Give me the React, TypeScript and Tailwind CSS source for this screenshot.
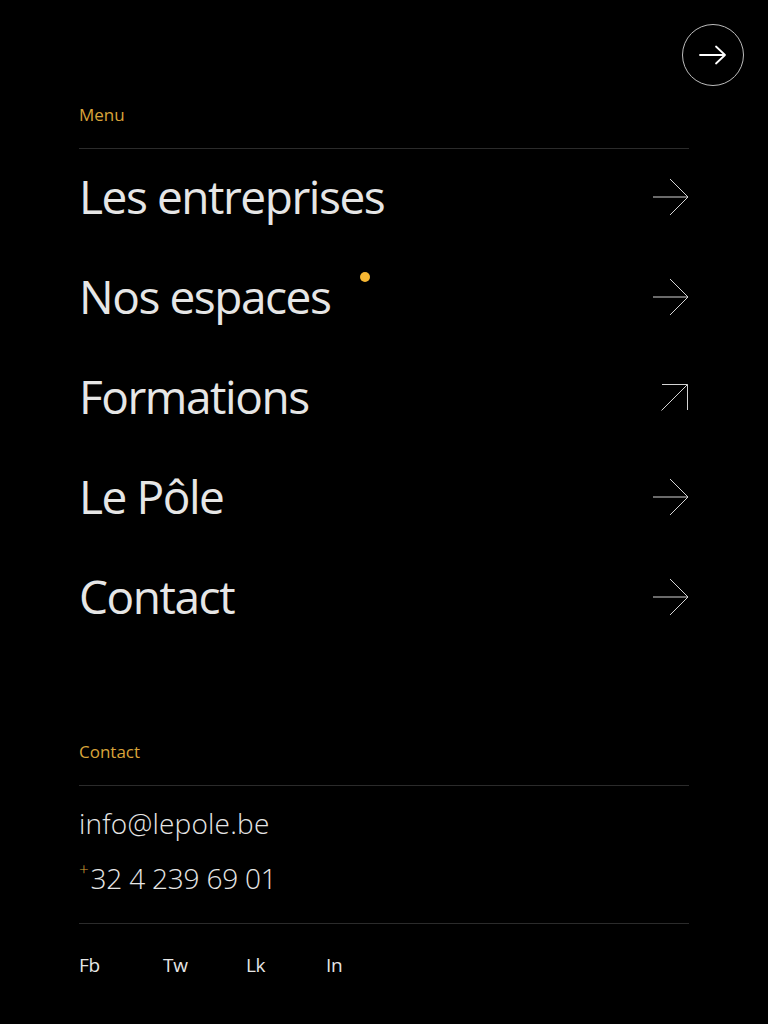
import React from "react";

const font = { fontFamily: '"Open Sans", "Noto Sans", sans-serif' };

function ArrowRight() {
  return (
    <svg width="37" height="38" viewBox="0 0 37 38" fill="none" className="block">
      <path d="M1 19 H36 M18 1 L36 19 L18 37" stroke="#d4d4d4" strokeWidth="1" />
    </svg>
  );
}

function ArrowUpRight() {
  return (
    <svg width="28" height="28" viewBox="0 0 28 28" fill="none" className="block">
      <path d="M1 1.5 H26.5 V27 M26.5 1.5 L0.5 27.5" stroke="#d4d4d4" strokeWidth="1" />
    </svg>
  );
}

const items = [
  { label: "Les entreprises", dot: false, ext: false },
  { label: "Nos espaces", dot: true, ext: false },
  { label: "Formations", dot: false, ext: true },
  { label: "Le Pôle", dot: false, ext: false },
  { label: "Contact", dot: false, ext: false },
];

export default function App() {
  return (
    <div className="min-h-[1024px] w-full bg-black text-[#e6e6e6]" style={font}>
      <div className="flex justify-end pt-[24px] pr-[24px]">
        <button className="flex h-[62px] w-[62px] items-center justify-center rounded-full border border-[#bdbdbd]">
          <svg width="28" height="20" viewBox="0 0 28 20" fill="none">
            <path d="M1 10 H26 M17 1.5 L26 10 L17 18.5" stroke="#ffffff" strokeWidth="1.8" strokeLinecap="round" strokeLinejoin="round" />
          </svg>
        </button>
      </div>

      <div className="px-[79px]">
        <div className="mt-[17px] border-b border-[#2b2b2b] pb-[21px] text-[17px] leading-[24px] text-[#d9a43a]">
          Menu
        </div>
        <ul>
          {items.map((it) => (
            <li key={it.label} className="flex h-[100px] items-center justify-between pb-[4px]">
              <div className="relative flex items-center">
                <span className="pb-[2px] text-[46px] leading-[60px] tracking-[-1.45px] text-[#e6e6e6]">{it.label}</span>
                {it.dot && (
                  <span className="absolute right-[-40px] top-[6px] h-[10px] w-[10px] rounded-full bg-[#f7b733]" />
                )}
              </div>
              {it.ext ? <ArrowUpRight /> : <ArrowRight />}
            </li>
          ))}
        </ul>

        <div className="mt-[91px] border-b border-[#2b2b2b] pb-[21px] text-[17px] leading-[24px] text-[#d9a43a]">
          Contact
        </div>
        <div className="border-b border-[#2b2b2b] pt-[19px] pb-[27px]">
          <div className="text-[28px] font-light leading-[36px] tracking-[0.2px]">info@lepole.be</div>
          <div className="mt-[19px] flex items-start text-[28px] font-light leading-[36px] tracking-[-0.2px]">
            <span className="mr-[2px] mt-[-3px] text-[17px] leading-[24px] text-[#d9a43a]">+</span>
            <span>32 4 239 69 01</span>
          </div>
        </div>
        <div className="flex pt-[29px] text-[19px] font-medium leading-[24px] tracking-[-0.3px]">
          <span className="w-[84px]">Fb</span>
          <span className="w-[83px]">Tw</span>
          <span className="w-[80px]">Lk</span>
          <span>In</span>
        </div>
      </div>
    </div>
  );
}
